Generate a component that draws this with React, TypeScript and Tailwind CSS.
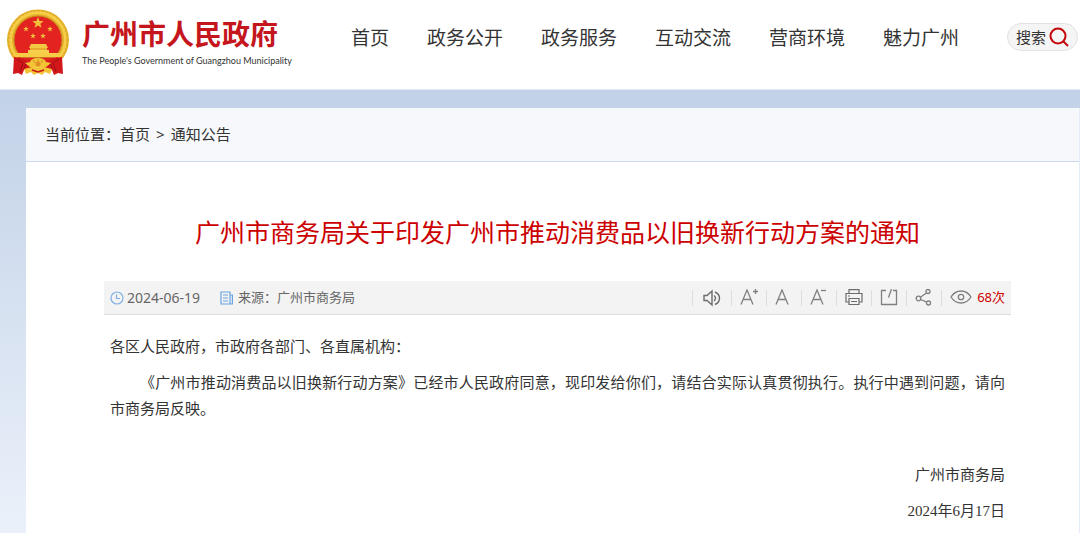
import { Fragment } from "react";

const navItems = [
  "首页",
  "政务公开",
  "政务服务",
  "互动交流",
  "营商环境",
  "魅力广州",
];

function Star({ x, y, r }: { x: number; y: number; r: number }) {
  return (
    <path
      transform={`translate(${x} ${y}) scale(${r})`}
      d="M0-1 .24-.32.95-.31.38.12.59.81 0 .4-.59.81-.38.12-.95-.31-.24-.32Z"
      fill="#f0c23c"
    />
  );
}

function Emblem() {
  return (
    <svg viewBox="0 0 64 68" className="h-[68px] w-16 shrink-0" aria-hidden="true">
      <ellipse cx="32" cy="31" rx="31" ry="30.500" fill="#e6b02c" />
      <circle cx="32" cy="31" r="27.500" fill="none" stroke="#f5cf48" strokeWidth="3" />
      <circle cx="32" cy="31" r="29" fill="none" stroke="#dca126" strokeWidth="1" strokeDasharray="2 2" />
      <circle cx="32" cy="31" r="24" fill="#e3231f" stroke="#c98a1a" strokeWidth="1" />
      <Star x={32} y={14} r={6} />
      <Star x={20} y={20} r={3} />
      <Star x={44} y={20} r={3} />
      <Star x={27} y={27} r={3} />
      <Star x={37} y={27} r={3} />
      <path d="M25 35h15l2 4H23Z" fill="#f3c944" />
      <path d="M24 39h17v4H24Z" fill="#e9ac2e" />
      <path d="M22 41h21v3H22Z" fill="#f6d04c" />
      <path d="M10 44h44l-2 4H12Z" fill="#f6cd45" />
      <path d="M12 48h40l-6 6H18Z" fill="#e3231f" />
      <path d="M14 48.500h36" stroke="#c9741e" strokeWidth="1" />
      <path d="M8 48c7 0 11 3 17 5l1 6-8 2-2 5-4-2-5 1Z" fill="#d3181b" />
      <path d="M56 48c-7 0-11 3-17 5l-1 6 8 2 2 5 4-2 5 1Z" fill="#d3181b" />
      <path d="m11 50 6 4-3 9M53 50l-6 4 3 9M20 54l-2 6M44 54l2 6" fill="none" stroke="#9d1015" strokeWidth="1" />
      <path d="M24 53c1-3 4-4 8-4s7 1 8 4l5 1-5 4H24l-5-4Z" fill="#f3c536" />
      <path d="m27 51 2 3M32 50v3M37 51l-2 3" stroke="#d68c20" strokeWidth="1" />
      <circle cx="32" cy="55" r="2.500" fill="#e08f22" />
      <path d="m18 60 8-2 6 2 6-2 8 2-2 5-5-2-3 3-4-2-4 2-3-3-5 2Z" fill="#f3c536" />
      <path d="m26 61 6 2 6-2" fill="none" stroke="#c8141b" strokeWidth="1.500" />
    </svg>
  );
}

function SpeakerIcon() {
  return (
    <svg width="22" height="18" viewBox="-2 -1 22 18" fill="none" stroke="#6b6b6b" strokeWidth="1.4">
      <path d="M1 5.500h3L9 1v14l-5-4.500H1ZM11 5.500c2 1.500 2 4 0 5.500M12 2c6 2.500 6 10 0 12.500" />
    </svg>
  );
}

function LetterIcon({ sign }: { sign?: "plus" | "minus" }) {
  return (
    <svg width="18" height="18" viewBox="0 0 18 18" fill="none" stroke="#808080" strokeWidth="1.3">
      <path d="M1 15.500 7 1l6 14.500M3.200 10.500h7.600" />
      {sign === "plus" && <path d="M13 2.500h5M15.500 0v5" />}
      {sign === "minus" && <path d="M11 1.500h5" />}
    </svg>
  );
}

function PrintIcon() {
  return (
    <svg width="18" height="18" viewBox="0 0 18 18" fill="none" stroke="#6b6b6b" strokeWidth="1.2">
      <path d="M4 4V.6h10V4M4 13H1V4.500h16V13h-3M4 9.500h10v6H4ZM3 7h2M6 12.500h6" />
    </svg>
  );
}

function ExportIcon() {
  return (
    <svg width="18" height="18" viewBox="0 0 18 18" fill="none" stroke="#808080" strokeWidth="1.3">
      <path d="M6 1.500H1.500v14h15v-14H13M11.500 0 8.500 8.500" />
    </svg>
  );
}

function ShareIcon() {
  return (
    <svg width="18" height="18" viewBox="0 0 18 18" fill="none" stroke="#808080" strokeWidth="1.3">
      <circle cx="13" cy="2.500" r="2" />
      <circle cx="3.500" cy="9.500" r="2.300" />
      <circle cx="13.500" cy="14" r="2" />
      <path d="m11.500 4-6.200 4.200M5.700 10.500l6 2.700" />
    </svg>
  );
}

function EyeIcon() {
  return (
    <svg width="22" height="18" viewBox="0 0 22 18" fill="none" stroke="#808080" strokeWidth="1.3">
      <path d="M1 8c5-8 15-8 20 0-5 8-15 8-20 0Z" />
      <circle cx="11" cy="8" r="2.700" />
    </svg>
  );
}

const tools = [
  { label: "朗读", icon: <SpeakerIcon /> },
  { label: "放大字体", icon: <LetterIcon sign="plus" /> },
  { label: "默认字体", icon: <LetterIcon /> },
  { label: "缩小字体", icon: <LetterIcon sign="minus" /> },
  { label: "打印", icon: <PrintIcon /> },
  { label: "导出", icon: <ExportIcon /> },
  { label: "分享", icon: <ShareIcon /> },
];

export default function App() {
  return (
    <div className="min-h-screen flex flex-col bg-linear-to-b from-[#c1d1e7] from-15% to-[#ebf1fa] font-['Noto_Sans','Noto_Sans_CJK_SC',sans-serif] text-[#333]">
      <header className="h-[90px] shrink-0 flex items-start bg-white border-b border-[#e6ebf5] pl-[6px] pr-[2px]">
        <a href="#" className="flex items-start pt-[9px]">
          <Emblem />
          <span className="ml-3 mt-[6px] flex flex-col whitespace-nowrap">
            <span className="text-[28px] leading-[38px] font-bold text-[#c4161c]">
              广州市人民政府
            </span>
            <span className="text-[9px] leading-4 font-['Lato',sans-serif] text-[#333]">
              The People's Government of Guangzhou Municipality
            </span>
          </span>
        </a>
        <nav className="ml-auto mt-6 flex gap-[38px] text-[19px] leading-7 whitespace-nowrap">
          {navItems.map((item) => (
            <a key={item} href="#">
              {item}
            </a>
          ))}
        </nav>
        <button className="ml-12 mt-[23px] h-7 w-[71px] flex items-center justify-center gap-[3px] rounded-full border border-[#e2e2e2] bg-[#f5f5f5] text-[15px] whitespace-nowrap">
          搜索
          <svg width="20" height="20" viewBox="0 0 20 20" fill="none" stroke="#c4060c" strokeWidth="2" aria-hidden="true">
            <circle cx="9" cy="9" r="7.500" />
            <path d="m14.500 14.500 4.500 4.500" />
          </svg>
        </button>
      </header>

      <main className="mt-[18px] ml-[26px] grow bg-white border-r border-[#e3ecf8]">
        <div className="h-[54px] flex items-center gap-[6px] border-b border-[#c9d9ee] bg-[#f6f8fb] pl-[19px] text-[15px]">
          <span>
            当前位置：<a href="#">首页</a>
          </span>
          <span>&gt;</span>
          <a href="#">通知公告</a>
        </div>

        <article className="pl-[78px] pr-[68px]">
          <h1 className="mt-[50px] text-center text-[25px] leading-10 text-[#c00]">
            广州市商务局关于印发广州市推动消费品以旧换新行动方案的通知
          </h1>

          <div className="mt-[29px] h-[34px] flex items-center border-b border-[#ddd] bg-[#f3f3f3] pl-[6px] pr-[6px] text-[13px] text-[#666]">
            <svg width="14" height="14" viewBox="0 0 14 14" fill="none" stroke="#7fb0e4" strokeWidth="1.2" aria-hidden="true">
              <circle cx="7" cy="7" r="6" />
              <path d="M6.500 3.500v4h3.500" />
            </svg>
            <time className="ml-[3px] text-[14px]">2024-06-19</time>
            <svg className="ml-5" width="13" height="14" viewBox="0 0 13 14" fill="none" stroke="#6ba3e0" strokeWidth="1.2" aria-hidden="true">
              <path d="M1 1h9v12H1ZM10 4h2.400v9H10M3 4h5M3 7h5M3 10h5" />
            </svg>
            <span className="ml-[5px]">来源：广州市商务局</span>

            <div className="ml-auto flex items-center">
              {tools.map(({ label, icon }) => (
                <Fragment key={label}>
                  <span className="h-4 w-px bg-[#ddd]" />
                  <button aria-label={label} className="mx-2">
                    {icon}
                  </button>
                </Fragment>
              ))}
              <span className="h-4 w-px bg-[#ddd]" />
              <span className="ml-2 flex items-center gap-[5px] text-[#c00]">
                <EyeIcon />
                68次
              </span>
            </div>
          </div>

          <div className="mt-[19px] pl-[6px] pr-[6px] text-[15px] leading-[26px] font-['Liberation_Serif','Noto_Sans_CJK_SC',sans-serif]">
            <p>各区人民政府，市政府各部门、各直属机构：</p>
            <p className="mt-[10px] indent-[30px] text-justify">
              《广州市推动消费品以旧换新行动方案》已经市人民政府同意，现印发给你们，请结合实际认真贯彻执行。执行中遇到问题，请向市商务局反映。
            </p>
            <p className="mt-10 text-right">广州市商务局</p>
            <p className="mt-[10px] text-right">2024年6月17日</p>
          </div>
        </article>
      </main>
    </div>
  );
}
